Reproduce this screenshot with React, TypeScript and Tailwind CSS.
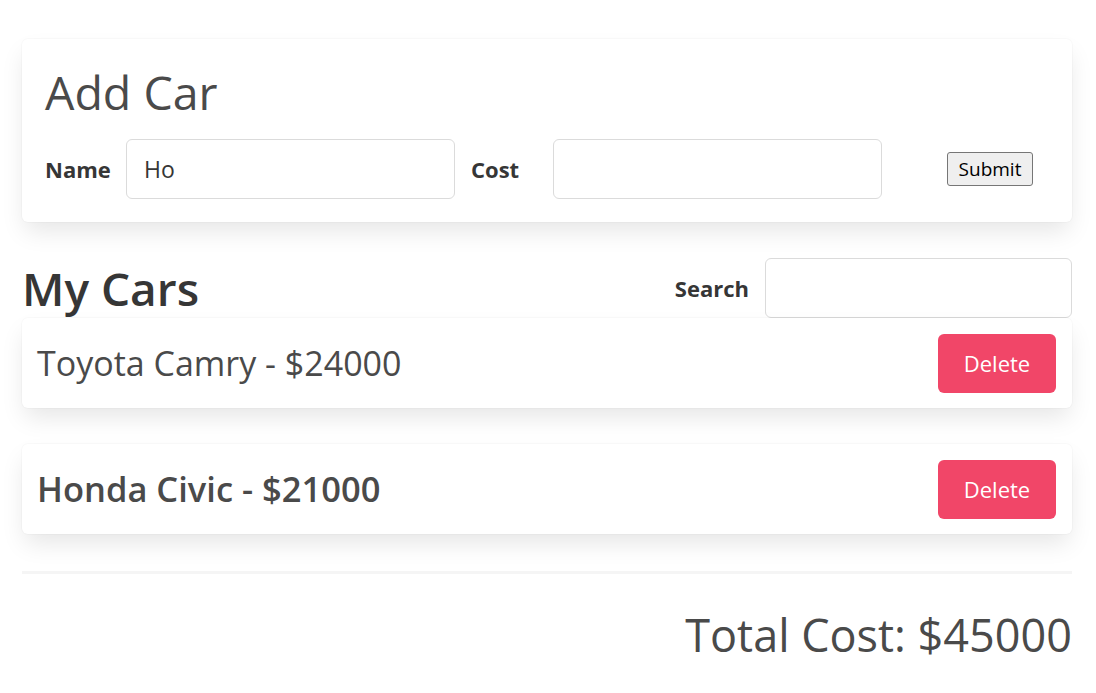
import React, { useState } from "react";

type Car = { name: string; cost: number; bold?: boolean };

const cars: Car[] = [
  { name: "Toyota Camry", cost: 24000 },
  { name: "Honda Civic", cost: 21000, bold: true },
];

const boxShadow =
  "shadow-[0_12px_24px_-3px_rgba(10,10,10,0.1),0_0_0_1px_rgba(10,10,10,0.02)]";

export default function App() {
  const [name, setName] = useState("Ho");
  const [cost, setCost] = useState("");
  const [search, setSearch] = useState("");

  const total = cars.reduce((sum, c) => sum + c.cost, 0);

  return (
    <div
      className="min-h-screen bg-white text-[#4a4a4a]"
      style={{ fontFamily: '"Open Sans", "Noto Sans", sans-serif' }}
    >
      <div className="ml-[22px] w-[1050px] pt-[39px]">
        {/* Add car form */}
        <div className={`rounded-[6px] bg-white px-[23px] pb-[23px] pt-[20px] ${boxShadow}`}>
          <h1 className="text-[46.5px] font-normal leading-[66px] text-[#4a4a4a]">Add Car</h1>
          <div className="mt-[14px] flex items-center">
            <label className="w-[81px] text-[22px] font-bold text-[#363636]">Name</label>
            <input
              value={name}
              onChange={(e) => setName(e.target.value)}
              className="h-[60px] w-[329px] rounded-[6px] border border-[#dbdbdb] px-[17px] text-[23px] text-[#363636] outline-none"
            />
            <label className="ml-[16px] w-[82px] text-[22px] font-bold text-[#363636]">Cost</label>
            <input
              value={cost}
              onChange={(e) => setCost(e.target.value)}
              className="h-[60px] w-[329px] rounded-[6px] border border-[#dbdbdb] px-[17px] text-[23px] text-[#363636] outline-none"
            />
            <button className="ml-[65px] h-[34px] w-[86px] rounded-[3px] border border-[#767676] bg-[#efefef] text-[19px] text-black">
              Submit
            </button>
          </div>
        </div>

        {/* List header */}
        <div className="mt-[36px] flex h-[60px] items-center justify-between">
          <h2 className="text-[46px] font-semibold leading-[60px] text-[#363636]">My Cars</h2>
          <div className="flex items-center">
            <label className="mr-[16px] text-[22px] font-bold text-[#363636]">Search</label>
            <input
              value={search}
              onChange={(e) => setSearch(e.target.value)}
              className="h-[60px] w-[307px] rounded-[6px] border border-[#dbdbdb] px-[17px] text-[23px] outline-none"
            />
          </div>
        </div>

        <div className="flex flex-col gap-[36px]">
          {cars.map((car) => (
            <div
              key={car.name}
              className={`flex h-[90px] items-center justify-between rounded-[6px] bg-white pl-[15px] pr-[16px] ${boxShadow}`}
            >
              <span
                className={`text-[#4a4a4a] ${car.bold ? "text-[34.5px] font-semibold" : "text-[34px] font-normal"}`}
              >
                {car.name} - ${car.cost}
              </span>
              <button className="h-[59px] w-[118px] rounded-[6px] bg-[#f14668] text-[22px] text-white">
                Delete
              </button>
            </div>
          ))}
        </div>

        <hr className="mt-[37px] h-[3px] border-0 bg-[#f5f5f5]" />

        <div className="mt-[25px] text-right text-[45px] leading-[72px] text-[#4a4a4a]">
          Total Cost: ${total}
        </div>
      </div>
    </div>
  );
}
